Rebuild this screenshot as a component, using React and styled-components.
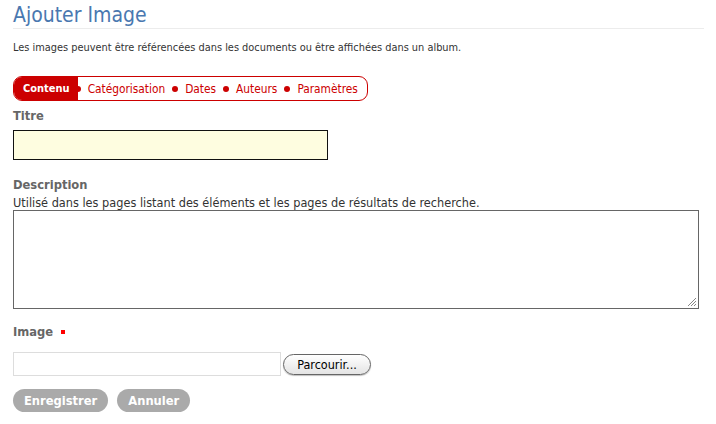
import React from 'react';
import styled, { createGlobalStyle } from 'styled-components';

const GlobalStyle = createGlobalStyle`
    html, body {
        margin: 0;
        padding: 0;
        background: #ffffff;
    }
    body {
        font-family: "DejaVu Sans Condensed", "DejaVu Sans", sans-serif;
        color: #333333;
    }
`;

const Page = styled.div`
    width: 716px;
    height: 424px;
    padding: 0 12px 0 13px;
    box-sizing: border-box;
    overflow: hidden;
`;

const Heading = styled.h1`
    margin: 0;
    padding: 3px 0 1px 0;
    font-size: 21px;
    font-weight: normal;
    line-height: 24px;
    color: #4a78b0;
    border-bottom: 1px solid #ececec;
`;

const Lead = styled.p`
    margin: 12px 0 0 0;
    font-size: 10.9px;
    line-height: 14px;
    color: #333333;
`;

const Tabs = styled.nav`
    display: flex;
    width: fit-content;
    align-items: center;
    margin-top: 21px;
    height: 25px;
    border: 1px solid #cc0000;
    border-radius: 9px;
    box-sizing: border-box;
    overflow: hidden;
    padding-right: 9px;
`;

const Tab = styled.span`
    display: flex;
    align-items: center;
    height: 100%;
    font-size: ${props => (props.active ? '11px' : '11.8px')};
    color: ${props => (props.active ? '#ffffff' : '#cc0000')};
    background: ${props => (props.active ? '#cc0000' : 'transparent')};
    font-weight: ${props => (props.active ? 'bold' : 'normal')};
    padding: ${props => (props.active ? '0 8px 0 9px' : '0')};
`;

const Dot = styled.span`
    flex: none;
    width: 6px;
    height: 6px;
    border-radius: 50%;
    background: #cc0000;
    margin: 0 7px 0 ${props => (props.first ? '-3px' : '7px')};
`;

const Field = styled.div`
    margin-top: ${props => props.top || 0}px;
`;

const Label = styled.label`
    display: flex;
    align-items: center;
    font-size: 12.8px;
    font-weight: bold;
    color: #666666;
    line-height: 16px;
`;

const Required = styled.span`
    display: inline-block;
    width: 4px;
    height: 4px;
    background: #ff0000;
    margin-left: 8px;
`;

const Help = styled.div`
    font-size: 12.6px;
    line-height: 15px;
    color: #333333;
    margin-top: 2px;
`;

const TitleInput = styled.div`
    width: 315px;
    height: 30px;
    margin-top: 6px;
    box-sizing: border-box;
    border: 1px solid #111111;
    background: #fefde0;
`;

const TextArea = styled.div`
    position: relative;
    width: 686px;
    height: 99px;
    box-sizing: border-box;
    border: 1px solid #666666;
    background: #ffffff;
`;

const Grip = styled.svg`
    position: absolute;
    right: 1px;
    bottom: 1px;
`;

const FileRow = styled.div`
    display: flex;
    align-items: center;
    margin-top: 12px;
    gap: 2px;
`;

const FileBox = styled.div`
    width: 268px;
    height: 24px;
    box-sizing: border-box;
    border: 1px solid #dddddd;
    background: #ffffff;
`;

const BrowseButton = styled.button`
    height: 21px;
    width: 88px;
    padding: 0;
    border: 1px solid #666666;
    border-radius: 11px;
    background: linear-gradient(#ffffff, #e4e4e4);
    font-family: "DejaVu Sans Condensed", "DejaVu Sans", sans-serif;
    font-size: 12.5px;
    color: #000000;
    box-shadow: 0 1px 1px rgba(0, 0, 0, 0.25);
`;

const Actions = styled.div`
    display: flex;
    gap: 9px;
    margin-top: 13px;
`;

const ActionButton = styled.button`
    height: 23px;
    padding: 0 11px;
    border: none;
    border-radius: 12px;
    background: #aaaaaa;
    color: #ffffff;
    font-family: "DejaVu Sans Condensed", "DejaVu Sans", sans-serif;
    font-size: 12.8px;
    font-weight: bold;
`;

const tabs = ['Catégorisation', 'Dates', 'Auteurs', 'Paramètres'];

export default function App() {
    return (
        <Page>
            <GlobalStyle />
            <Heading>Ajouter Image</Heading>
            <Lead>Les images peuvent être référencées dans les documents ou être affichées dans un album.</Lead>
            <Tabs>
                <Tab active>Contenu</Tab>
                {tabs.map((t, i) => (
                    <React.Fragment key={t}>
                        <Dot first={i === 0} />
                        <Tab>{t}</Tab>
                    </React.Fragment>
                ))}
            </Tabs>
            <Field top={7}>
                <Label>Titre</Label>
                <TitleInput />
            </Field>
            <Field top={17}>
                <Label>Description</Label>
                <Help>Utilisé dans les pages listant des éléments et les pages de résultats de recherche.</Help>
                <TextArea>
                    <Grip width="11" height="11" viewBox="0 0 11 11">
                        <path d="M10 2 L2 10 M10 5 L5 10 M10 8 L8 10" stroke="#888888" strokeWidth="1" />
                    </Grip>
                </TextArea>
            </Field>
            <Field top={15}>
                <Label>Image <Required /></Label>
                <FileRow>
                    <FileBox />
                    <BrowseButton>Parcourir...</BrowseButton>
                </FileRow>
            </Field>
            <Actions>
                <ActionButton>Enregistrer</ActionButton>
                <ActionButton>Annuler</ActionButton>
            </Actions>
        </Page>
    );
}
